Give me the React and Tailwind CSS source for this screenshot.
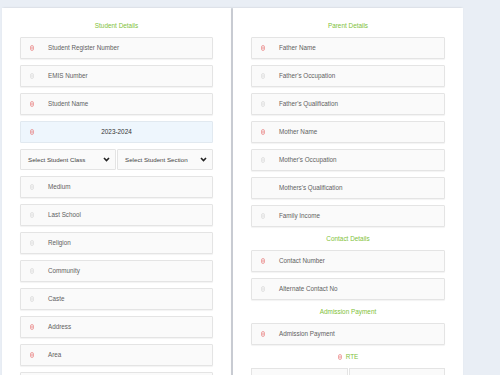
import React from 'react';

const Icon = ({ red }) => (
  <svg width="4" height="6" viewBox="0 0 4 6" className="shrink-0">
    <rect x="0.7" y="0.7" width="2.6" height="4.6" rx="0.8" fill="none" stroke={red ? '#e87070' : '#d6d6d6'} strokeWidth="0.7" />
    <line x1="0.7" y1="3" x2="3.3" y2="3" stroke={red ? '#e87070' : '#d6d6d6'} strokeWidth="0.6" />
  </svg>
);

const Field = ({ label, red, noIcon }) => (
  <div className="h-[22px] flex items-center bg-[#fafafa] border border-[#e4e4e4] rounded-[1px] shadow-[0_1px_1px_rgba(0,0,0,0.05)] pl-[9px]">
    <div className="w-[4px] flex">{!noIcon && <Icon red={red} />}</div>
    <span className="ml-[14px] text-[6.3px] text-[#5f5f5f]">{label}</span>
  </div>
);

const Title = ({ children, icon }) => (
  <div className="h-[11px] leading-[11px] flex items-center justify-center gap-[4px] text-[6.4px] text-[#7fc23a]">
    {icon && <Icon red />}
    <span>{children}</span>
  </div>
);

const Chevron = () => (
  <svg width="7" height="5" viewBox="0 0 7 5">
    <path d="M1 1l2.5 2.5L6 1" fill="none" stroke="#222" strokeWidth="1.6" />
  </svg>
);

const SelectBox = ({ label }) => (
  <div className="flex-1 h-[21px] flex items-center justify-between bg-[#fafafa] border border-[#e4e4e4] rounded-[1px] pl-[7px] pr-[5px]">
    <span className="text-[6.2px] text-[#444]">{label}</span>
    <Chevron />
  </div>
);

export default function App() {
  return (
    <div
      className="w-[500px] h-[375px] overflow-hidden bg-[#e9eef5] flex items-start gap-[2px] pt-[8px] pl-[2px]"
      style={{ fontFamily: '"Liberation Sans", Arial, sans-serif' }}
    >
      <div className="w-[229px] h-[400px] bg-white shadow-[1px_0_2px_rgba(0,0,0,0.15)] px-[18px] pt-[12px] flex flex-col gap-[6px]">
        <Title>Student Details</Title>
        <Field label="Student Register Number" red />
        <Field label="EMIS Number" />
        <Field label="Student Name" red />
        <div className="h-[22px] flex items-center bg-[#eef6fd] border border-[#e1e9f0] rounded-[1px] pl-[9px]">
          <Icon red />
          <span className="flex-1 text-center pr-[13px] text-[6.4px] text-[#333]">2023-2024</span>
        </div>
        <div className="flex gap-[1px]">
          <SelectBox label="Select Student Class" />
          <SelectBox label="Select Student Section" />
        </div>
        <Field label="Medium" />
        <Field label="Last School" />
        <Field label="Religion" />
        <Field label="Community" />
        <Field label="Caste" />
        <Field label="Address" red />
        <Field label="Area" red />
        <Field label="" />
      </div>
      <div className="w-[230px] h-[400px] bg-white shadow-[-1px_0_2px_rgba(0,0,0,0.15)] px-[18px] pt-[12px] flex flex-col gap-[6px]">
        <Title>Parent Details</Title>
        <Field label="Father Name" red />
        <Field label="Father's Occupation" />
        <Field label="Father's Qualification" />
        <Field label="Mother Name" red />
        <Field label="Mother's Occupation" />
        <Field label="Mothers's Qualification" noIcon />
        <Field label="Family Income" />
        <Title>Contact Details</Title>
        <Field label="Contact Number" red />
        <Field label="Alternate Contact No" />
        <Title>Admission Payment</Title>
        <Field label="Admission Payment" red />
        <Title icon>RTE</Title>
        <div className="flex gap-[1px]">
          <div className="flex-1 h-[22px] bg-[#fafafa] border border-[#e4e4e4]" />
          <div className="flex-1 h-[22px] bg-[#fafafa] border border-[#e4e4e4]" />
        </div>
      </div>
    </div>
  );
}
